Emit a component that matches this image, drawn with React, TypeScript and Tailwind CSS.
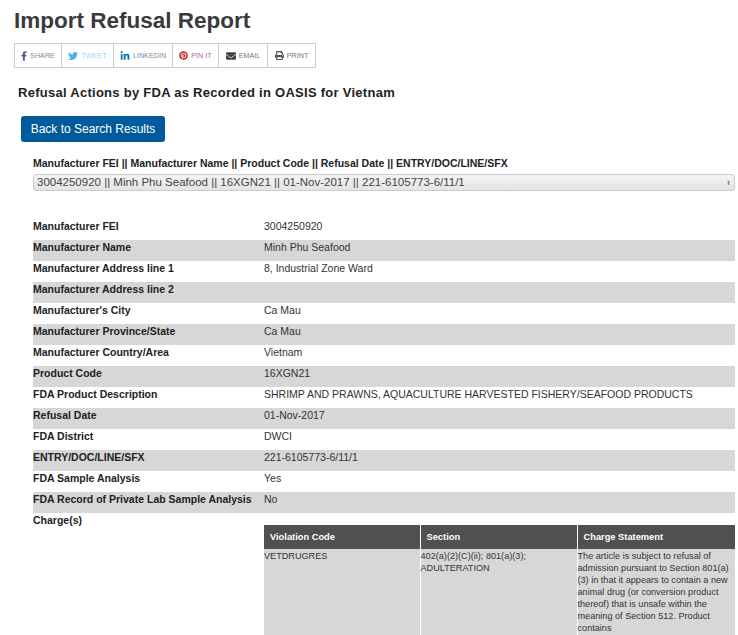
import { FaFacebookF, FaTwitter, FaLinkedinIn, FaPinterest, FaEnvelope, FaPrint } from 'react-icons/fa';

const shareButtons = [
  { label: 'SHARE', icon: FaFacebookF, width: 'w-[46px]', iconSize: 'h-[10px] w-[6px]', iconColor: 'text-[#4a5a80]', textColor: 'text-[#8a8a8a]' },
  { label: 'TWEET', icon: FaTwitter, width: 'w-[52px]', iconSize: 'h-[10px] w-[10px]', iconColor: 'text-[#55acee]', textColor: 'text-[#9fd3f3]' },
  { label: 'LINKEDIN', icon: FaLinkedinIn, width: 'w-[59px]', iconSize: 'h-[10px] w-[10px]', iconColor: 'text-[#0976b4]', textColor: 'text-[#7d8a96]' },
  { label: 'PIN IT', icon: FaPinterest, width: 'w-[46px]', iconSize: 'h-[9px] w-[9px]', iconColor: 'text-[#cb2027]', textColor: 'text-[#c0609a]' },
  { label: 'EMAIL', icon: FaEnvelope, width: 'w-[49px]', iconSize: 'h-[10px] w-[10px]', iconColor: 'text-[#444444]', textColor: 'text-[#777777]' },
  { label: 'PRINT', icon: FaPrint, width: 'w-[48px]', iconSize: 'h-[9px] w-[9px]', iconColor: 'text-[#555555]', textColor: 'text-[#777777]' },
];

const details = [
  ['Manufacturer FEI', '3004250920'],
  ['Manufacturer Name', 'Minh Phu Seafood'],
  ['Manufacturer Address line 1', '8, Industrial Zone Ward'],
  ['Manufacturer Address line 2', ''],
  ["Manufacturer's City", 'Ca Mau'],
  ['Manufacturer Province/State', 'Ca Mau'],
  ['Manufacturer Country/Area', 'Vietnam'],
  ['Product Code', '16XGN21'],
  ['FDA Product Description', 'SHRIMP AND PRAWNS, AQUACULTURE HARVESTED FISHERY/SEAFOOD PRODUCTS'],
  ['Refusal Date', '01-Nov-2017'],
  ['FDA District', 'DWCI'],
  ['ENTRY/DOC/LINE/SFX', '221-6105773-6/11/1'],
  ['FDA Sample Analysis', 'Yes'],
  ['FDA Record of Private Lab Sample Analysis', 'No'],
];

export default function App() {
  return (
    <div className="h-[635px] overflow-hidden bg-white font-['Liberation_Sans',Arial,sans-serif] text-[#333333]">
      <h1 className="pl-[14px] pt-[7px] text-[22.5px] leading-[28px] font-bold text-[#3a3a3a]">Import Refusal Report</h1>

      <div className="ml-[14px] mt-[8px] flex h-[25px] w-fit border border-[#cccccc]">
        {shareButtons.map((btn, i) => {
          const Icon = btn.icon;
          return (
            <div
              key={btn.label}
              className={`flex items-center justify-center gap-[3px] ${btn.width} ${i > 0 ? 'border-l border-[#cccccc]' : ''}`}
            >
              <Icon className={`shrink-0 ${btn.iconSize} ${btn.iconColor}`} />
              <span className={`pt-[1px] text-[7.2px] ${btn.textColor}`}>{btn.label}</span>
            </div>
          );
        })}
      </div>

      <h2 className="mt-[16px] pl-[18px] text-[13px] leading-[18px] font-bold tracking-[0.27px] text-[#222222]">
        Refusal Actions by FDA as Recorded in OASIS for Vietnam
      </h2>

      <button className="ml-[21px] mt-[14px] block h-[26px] w-[144px] rounded-[3px] bg-[#005b9c] text-center text-[12px] text-white">
        Back to Search Results
      </button>

      <div className="ml-[33px] mt-[14px] text-[10.5px] leading-[14px] font-bold text-[#222222]">
        Manufacturer FEI || Manufacturer Name || Product Code || Refusal Date || ENTRY/DOC/LINE/SFX
      </div>

      <div className="ml-[33px] mr-[3px] mt-[4px] flex h-[17px] items-center justify-between rounded-[3px] border border-[#cccccc] bg-gradient-to-b from-[#f4f4f4] to-[#e4e4e4] pl-[3px] pr-[3px] text-[11.5px] text-[#444444]">
        <span>3004250920 || Minh Phu Seafood || 16XGN21 || 01-Nov-2017 || 221-6105773-6/11/1</span>
        <span className="text-[6px] leading-[6px] text-[#888888]">⬍</span>
      </div>

      <div className="ml-[33px] mr-[3px] mt-[28px]">
        {details.map(([label, value], i) => (
          <div key={label} className={`flex h-[21px] text-[10.5px] leading-[14px] ${i % 2 === 1 ? 'bg-[#d7d7d7]' : ''}`}>
            <div className="w-[231px] shrink-0 font-bold text-[#222222]">{label}</div>
            <div className="text-[#333333]">{value}</div>
          </div>
        ))}

        <div className="flex text-[10.5px] leading-[14px]">
          <div className="w-[231px] shrink-0 font-bold text-[#222222]">Charge(s)</div>
          <table className="mt-[12px] w-[471px] table-fixed border-collapse text-[9.15px] leading-[12px]">
            <thead>
              <tr className="h-[24px] bg-[#505050] text-left text-[9.3px] font-bold text-white">
                <th className="w-[156px] border-r border-white pl-[6px]">Violation Code</th>
                <th className="w-[157px] border-r border-white pl-[6px]">Section</th>
                <th className="pl-[6px]">Charge Statement</th>
              </tr>
            </thead>
            <tbody>
              <tr className="bg-[#d7d7d7] align-top text-[#333333]">
                <td className="border-r border-white pt-[1px]">VETDRUGRES</td>
                <td className="border-r border-white pt-[1px]">402(a)(2)(C)(ii); 801(a)(3); ADULTERATION</td>
                <td className="pt-[1px] pb-[24px]">
                  The article is subject to refusal of admission pursuant to Section 801(a)(3) in that it appears to contain a new animal drug (or conversion product thereof) that is unsafe within the meaning of Section 512. Product contains
                </td>
              </tr>
            </tbody>
          </table>
        </div>
      </div>
    </div>
  );
}
